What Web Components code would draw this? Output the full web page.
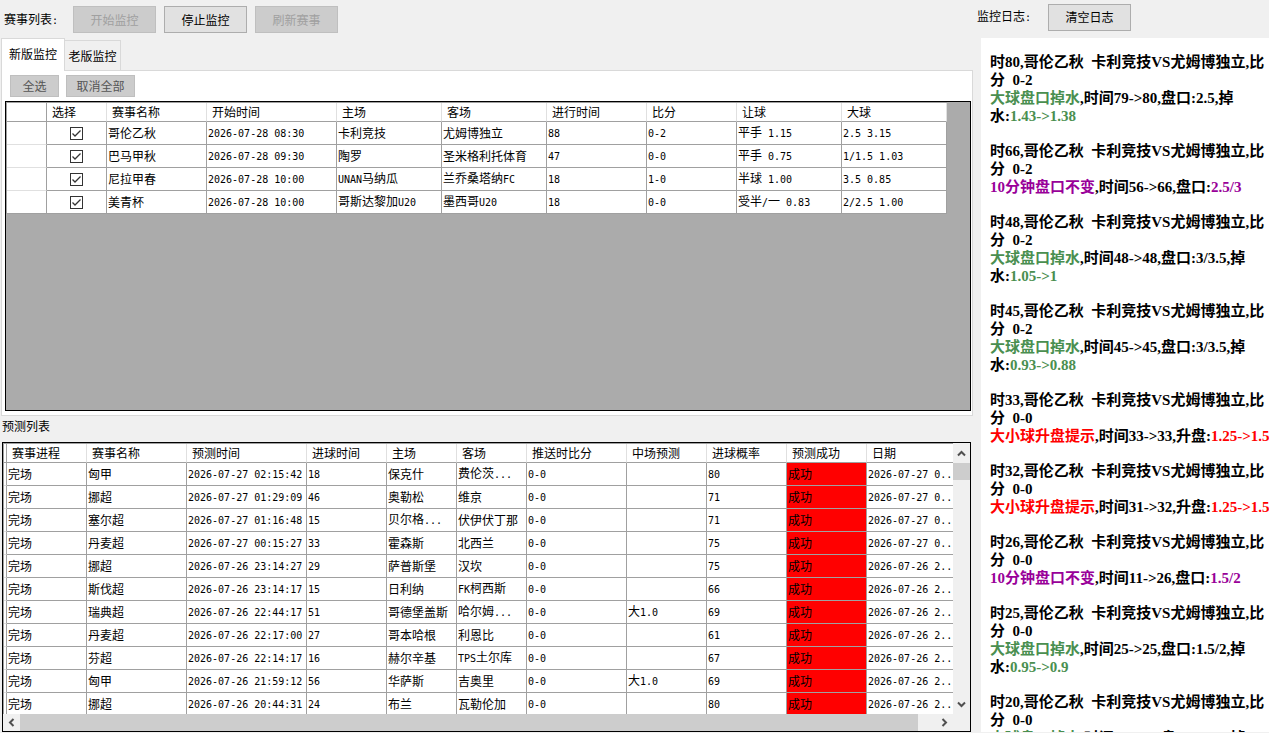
<!DOCTYPE html>
<html lang="zh-CN">
<head>
<meta charset="utf-8">
<title>赛事监控</title>
<style>
html, body { margin: 0; height: 100%; }
body { background: #f0f0f0; color: #000; font: 12px/16px "Noto Sans CJK SC", sans-serif; overflow: hidden; }
</style>
</head>
<body>
<monitor-app></monitor-app>
<script>
// ASCII runs are set in a half-width face so that two letters take the room of one ideograph.
const esc = s => s.replace(/&/g, '&amp;').replace(/</g, '&lt;').replace(/>/g, '&gt;');
const half = s => s.split(/([\x20-\x7e]+)/).map((p, i) => i % 2 ? `<span class="h">${esc(p)}</span>` : p).join('');
const halfCss = '.h { font: 10px/16px "DejaVu Sans Mono", monospace; white-space: pre; }';

const define = (name, html, setup) => customElements.define(name, class extends HTMLElement {
  connectedCallback() {
    if (this.shadowRoot) return;
    const t = document.createElement('template');
    t.innerHTML = html;
    this.attachShadow({ mode: 'open' }).append(t.content.cloneNode(true));
    if (setup) setup(this, this.shadowRoot);
  }
});

define('push-button', `<style>
:host { display: block; width: 83px; height: 27px; }
:host([small]) { height: 22px; }
:host([narrow]) { width: 49px; }
:host([medium]) { width: 69px; }
button { box-sizing: border-box; width: 100%; height: 100%; margin: 0; padding: 0; border: 1px solid #adadad; background: #e1e1e1; color: #000; font: inherit; }
:host([muted]) button { background: #ccc; border-color: #bfbfbf; color: #555; }
button:disabled { background: #ccc; border-color: #bfbfbf; color: #a0a0a0; }
</style><button type="button"><slot></slot></button>`, (el, root) => {
  root.querySelector('button').disabled = el.hasAttribute('disabled');
});

define('tool-bar', `<style>
:host { display: flex; align-items: center; gap: 8px; }
.label { width: 61px; }
:host([wide]) .label { width: 63px; }
${halfCss}
</style><span class="label"></span><slot></slot>`, (el, root) => {
  root.querySelector('.label').innerHTML = half(el.getAttribute('label'));
});

define('tab-strip', `<style>
:host { display: flex; align-items: flex-end; padding-left: 1px; }
button { box-sizing: border-box; height: 30px; width: 56px; margin: 0; padding: 0; border: 1px solid #d9d9d9; border-left: 0; border-bottom: 0; background: #f0f0f0; color: #000; font: inherit; white-space: nowrap; }
button[aria-selected=true] { height: 33px; width: 64px; margin-bottom: -1px; padding-bottom: 2px; border-left: 1px solid #d9d9d9; background: #fff; position: relative; z-index: 1; }
</style><button type="button" role="tab" aria-selected="true">新版监控</button><button type="button" role="tab" aria-selected="false">老版监控</button>`);

define('scroll-bar', `<style>
:host { display: flex; background: #f0f0f0; }
:host([vertical]) { flex-direction: column; }
button { flex: none; width: 17px; height: 17px; margin: 0; padding: 0; border: 0; background: none; display: grid; place-items: center; }
:host([vertical]) button { height: 20px; width: 100%; }
.track { flex: 1; display: flex; min-width: 0; min-height: 0; }
.thumb { background: #cdcdcd; width: 98%; height: 100%; }
:host([vertical]) .thumb { height: 17px; width: 100%; }
svg { display: block; width: 9px; height: 9px; fill: none; stroke: #505050; stroke-width: 2; }
:host([vertical]) svg { transform: rotate(90deg); }
</style><button type="button" aria-label="向前滚动"><svg viewBox="0 0 9 9"><path d="M6.500 1L3 4.500L6.500 8"/></svg></button><div class="track"><div class="thumb"></div></div><button type="button" aria-label="向后滚动"><svg viewBox="0 0 9 9"><path d="M2.500 1L6 4.500L2.500 8"/></svg></button>`);

const gridCss = `
:host { display: block; box-sizing: border-box; border: 1px solid #000; background: #ababab; min-height: 0; overflow: hidden; }
table { table-layout: fixed; border-collapse: separate; border-spacing: 0; width: 0; background: #fff; border: solid #a0a0a0; border-width: 1px 0 0 1px; }
th, td { box-sizing: border-box; padding: 0 0 0 1px; height: 23px; border: solid #a0a0a0; border-width: 0 1px 1px 0; font-weight: normal; text-align: left; white-space: nowrap; overflow: hidden; }
thead th { height: 19px; padding-left: 5px; border-right-color: #e0e0e0; }
thead th:first-child { border-right-color: #a0a0a0; }
tbody th { border-bottom-color: #e0e0e0; padding: 0; }
tbody tr:last-child th { border-bottom-color: #a0a0a0; }
${halfCss}`;
const tableHtml = (widths, heads, rows, cell) =>
  `<table><colgroup>${widths.map(w => `<col style="width:${w}px">`).join('')}</colgroup>
  <thead><tr><th></th>${heads.map(h => `<th scope="col">${h}</th>`).join('')}</tr></thead>
  <tbody>${rows.map(r => `<tr><th></th>${r.map(cell).join('')}</tr>`).join('')}</tbody></table>`;

const matches = [
  ['哥伦乙秋', '2026-07-28 08:30', '卡利竞技', '尤姆博独立', '88', '0-2', '平手 1.15', '2.5 3.15'],
  ['巴马甲秋', '2026-07-28 09:30', '陶罗', '圣米格利托体育', '47', '0-0', '平手 0.75', '1/1.5 1.03'],
  ['尼拉甲春', '2026-07-28 10:00', 'UNAN马纳瓜', '兰乔桑塔纳FC', '18', '1-0', '半球 1.00', '3.5 0.85'],
  ['美青杯', '2026-07-28 10:00', '哥斯达黎加U20', '墨西哥U20', '18', '0-0', '受半/一 0.83', '2/2.5 1.00']
];

define('match-grid', `<style>${gridCss}
.pick { text-align: center; padding: 0; }
label { display: grid; place-items: center; position: relative; }
input { appearance: none; box-sizing: border-box; width: 13px; height: 13px; margin: 0; border: 1px solid #333; background: #fff; }
svg { position: absolute; width: 13px; height: 13px; fill: none; stroke: #333; pointer-events: none; }
</style>` + tableHtml([40, 60, 100, 130, 105, 105, 100, 90, 105, 105],
  ['选择', '赛事名称', '开始时间', '主场', '客场', '进行时间', '比分', '让球', '大球'],
  matches.map(r => ['pick', ...r]),
  (c, i, row) => i ? `<td>${half(c)}</td>` : `<td class="pick"><label aria-label="${row[1]}"><input type="checkbox" checked><svg viewBox="0 0 13 13"><path d="M2.500 6.500L5 9L10.500 3.500" stroke-width="1.300"/></svg></label></td>`));

const predictions = [
  ['匈甲', '2026-07-27 02:15:42', '18', '保克什', '费伦茨...', '', '80'],
  ['挪超', '2026-07-27 01:29:09', '46', '奥勒松', '维京', '', '71'],
  ['塞尔超', '2026-07-27 01:16:48', '15', '贝尔格...', '伏伊伏丁那', '', '71'],
  ['丹麦超', '2026-07-27 00:15:27', '33', '霍森斯', '北西兰', '', '75'],
  ['挪超', '2026-07-26 23:14:27', '29', '萨普斯堡', '汉坎', '', '75'],
  ['斯伐超', '2026-07-26 23:14:17', '15', '日利纳', 'FK柯西斯', '', '66'],
  ['瑞典超', '2026-07-26 22:44:17', '51', '哥德堡盖斯', '哈尔姆...', '大1.0', '69'],
  ['丹麦超', '2026-07-26 22:17:00', '27', '哥本哈根', '利恩比', '', '61'],
  ['芬超', '2026-07-26 22:14:17', '16', '赫尔辛基', 'TPS土尔库', '', '67'],
  ['匈甲', '2026-07-26 21:59:12', '56', '华萨斯', '吉奥里', '大1.0', '69'],
  ['挪超', '2026-07-26 20:44:31', '24', '布兰', '瓦勒伦加', '', '80']
];

define('prediction-grid', `<style>${gridCss}
:host { display: grid; grid-template: minmax(0, 1fr) 17px / minmax(0, 1fr) 17px; background: #f0f0f0; }
.view { overflow: hidden; background: #fff; }
.hit { background: #f00; }
</style><div class="view">` + tableHtml([3, 80, 100, 120, 80, 70, 70, 100, 80, 80, 80, 100],
  ['赛事进程', '赛事名称', '预测时间', '进球时间', '主场', '客场', '推送时比分', '中场预测', '进球概率', '预测成功', '日期'],
  predictions.map(([lg, t, g, a, b, mid, p]) => ['完场', lg, t, g, a, b, '0-0', mid, p, '成功', t.slice(0, 12) + '..']),
  (c, i) => `<td${i === 9 ? ' class="hit"' : ''}>${half(c)}</td>`) +
  `</div><scroll-bar vertical></scroll-bar><scroll-bar></scroll-bar>`);

define('log-entry', `<style>
:host { display: block; white-space: pre; }
b { color: var(--mark); font-weight: inherit; }
</style><div class="lines"></div>`, (el, root) => {
  const colors = { drop: '#4a8f50', same: '#909', rise: '#f00' };
  el.style.setProperty('--mark', colors[el.kind]);
  root.querySelector('.lines').innerHTML = el.lines.map(l =>
    `<div>${esc(l).replace(/\[(.*?)\]/g, '<b>$1</b>')}</div>`).join('');
});

const drop = (a, b, line, odds) => [`[大球盘口掉水],时间${a}->${b},盘口:${line},掉`, `水:[${odds}]`];
const log = [
  [80, '0-2', 'drop', drop(79, 80, '2.5', '1.43->1.38')],
  [66, '0-2', 'same', ['[10分钟盘口不变],时间56->66,盘口:[2.5/3]']],
  [48, '0-2', 'drop', drop(48, 48, '3/3.5', '1.05->1')],
  [45, '0-2', 'drop', drop(45, 45, '3/3.5', '0.93->0.88')],
  [33, '0-0', 'rise', ['[大小球升盘提示],时间33->33,升盘:[1.25->1.5]']],
  [32, '0-0', 'rise', ['[大小球升盘提示],时间31->32,升盘:[1.25->1.5]']],
  [26, '0-0', 'same', ['[10分钟盘口不变],时间11->26,盘口:[1.5/2]']],
  [25, '0-0', 'drop', drop(25, 25, '1.5/2', '0.95->0.9')],
  [20, '0-0', 'drop', drop(20, 20, '1.5/2', '0.95->0.9').slice(0, 1)]
];

define('log-panel', `<style>
:host { display: flex; flex-direction: column; gap: 17px; box-sizing: border-box; padding: 15px 0 0 9px; background: #fff; min-height: 0; overflow: hidden; font: bold 15px/18px "Liberation Serif", "Noto Sans CJK SC", serif; }
log-entry { flex: none; }
</style>`, (el, root) => {
  for (const [minute, score, kind, tail] of log) {
    const e = document.createElement('log-entry');
    e.kind = kind;
    e.lines = [`时${minute},哥伦乙秋  卡利竞技VS尤姆博独立,比`, `分  ${score}`, ...tail];
    root.append(e);
  }
});

define('monitor-app', `<style>
:host { display: grid; grid-template: minmax(0, 1fr) / minmax(0, 1fr) 296px; height: 100vh; box-sizing: border-box; padding-bottom: 1px; }
main { display: grid; grid-template-rows: 38px 32px minmax(0, 346fr) 26px minmax(0, 290fr); min-width: 0; min-height: 0; }
aside { display: grid; grid-template-rows: 38px minmax(0, 1fr); padding-left: 8px; min-width: 0; min-height: 0; }
main > tool-bar { padding: 1px 0 0 4px; }
aside > tool-bar { margin-left: -4px; padding-bottom: 4px; }
.page { display: flex; flex-direction: column; box-sizing: border-box; border: 1px solid #d9d9d9; background: #fff; margin: 0 0 0 1px; padding: 4px 1px 4px 3px; min-height: 0; }
.picks { display: flex; gap: 7px; padding: 0 0 4px 5px; }
match-grid { flex: 1; }
h2 { margin: 0; padding: 2px 0 0 2px; font: inherit; }
prediction-grid { margin: 0 2px 0 2px; }
</style>
<main>
  <tool-bar label="赛事列表:"><push-button disabled>开始监控</push-button><push-button>停止监控</push-button><push-button disabled>刷新赛事</push-button></tool-bar>
  <tab-strip role="tablist"></tab-strip>
  <section class="page">
    <div class="picks"><push-button small narrow muted>全选</push-button><push-button small medium muted>取消全部</push-button></div>
    <match-grid></match-grid>
  </section>
  <h2>预测列表</h2>
  <prediction-grid></prediction-grid>
</main>
<aside>
  <tool-bar wide label="监控日志:"><push-button>清空日志</push-button></tool-bar>
  <log-panel></log-panel>
</aside>`);
</script>
</body>
</html>
